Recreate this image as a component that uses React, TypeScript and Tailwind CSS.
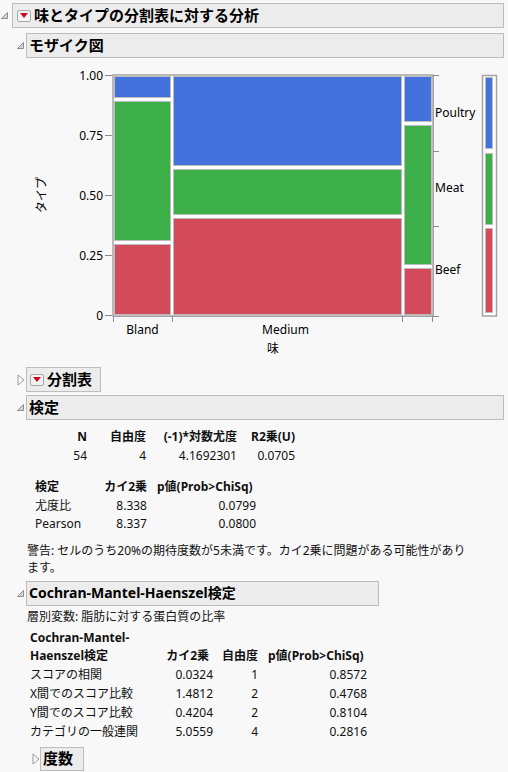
const BLUE = '#4472dc';
const GREEN = '#3daf48';
const RED = '#d34a5a';

const OpenTri = () => (
  <svg width="7" height="7" viewBox="0 0 7 7" className="block">
    <path d="M0.5 6.5 L6.5 0.5 L6.5 6.5 Z" fill="#d6d6d6" stroke="#8c8c8c" strokeWidth="1" />
  </svg>
);

const ClosedTri = () => (
  <svg width="8" height="12" viewBox="0 0 8 12" className="block">
    <path d="M1 1 L7 6 L1 11 Z" fill="#fafafa" stroke="#9a9a9a" strokeWidth="1" />
  </svg>
);

const RedBtn = () => (
  <span className="inline-flex w-[14px] h-[12px] items-center justify-center rounded-[2px] border border-[#a9a9a9] bg-[#f3f3f3] shrink-0">
    <svg width="8" height="5" viewBox="0 0 8 5" className="block">
      <path d="M0 0 L8 0 L4 5 Z" fill="#d0021b" />
    </svg>
  </span>
);

interface HeaderProps {
  label: string;
  open?: boolean;
  menu?: boolean;
  lead: string;
  box: string;
  size?: string;
}

const Header: React.FC<HeaderProps> = ({ label, open = true, menu = false, lead, box, size = 'text-[15px]' }) => (
  <div className="flex items-center">
    <div className={lead}>{open ? <OpenTri /> : <ClosedTri />}</div>
    <div className={`h-[25px] border border-[#bdbdbd] bg-[#ececec] flex items-center gap-[3px] font-bold text-black ${size} ${box}`}>
      {menu && <RedBtn />}
      <span className="whitespace-nowrap leading-none">{label}</span>
    </div>
  </div>
);

const Mosaic = () => {
  const cells = [
    // Bland
    { x: 114, w: 57, y: 76, h: 22, c: BLUE },
    { x: 114, w: 57, y: 101, h: 140, c: GREEN },
    { x: 114, w: 57, y: 244, h: 71, c: RED },
    // Medium
    { x: 173, w: 229, y: 76, h: 90, c: BLUE },
    { x: 173, w: 229, y: 169, h: 46, c: GREEN },
    { x: 173, w: 229, y: 218, h: 97, c: RED },
    // Spicy
    { x: 404, w: 28, y: 76, h: 46, c: BLUE },
    { x: 404, w: 28, y: 125, h: 140, c: GREEN },
    { x: 404, w: 28, y: 268, h: 47, c: RED },
  ];
  const legend = [
    { y: 77, h: 72, c: BLUE },
    { y: 153, h: 72, c: GREEN },
    { y: 228, h: 85, c: RED },
  ];
  const yTicks = [
    { y: 315, t: '0' },
    { y: 255, t: '0.25' },
    { y: 195, t: '0.50' },
    { y: 135, t: '0.75' },
    { y: 75, t: '1.00' },
  ];
  return (
    <svg width="508" height="305" viewBox="0 58 508 305" className="block">
      <g fontFamily="'Noto Sans','Noto Sans CJK JP',sans-serif" fontSize="12" fill="#000">
        <rect x="113" y="75" width="320" height="241" fill="#ffffff" stroke="#a4a4a4" strokeWidth="1.5" />
        {cells.map((r, i) => (
          <rect key={i} x={r.x + 0.5} y={r.y + 0.5} width={r.w - 1} height={r.h - 1} fill={r.c} stroke="#bdbdbd" strokeWidth="1" />
        ))}
        {/* left axis */}
        {yTicks.map((t) => (
          <g key={t.t}>
            <line x1="105" x2="112" y1={t.y + 0.5} y2={t.y + 0.5} stroke="#8c8c8c" />
            <text x="103" y={t.y + 4.5} textAnchor="end">{t.t}</text>
          </g>
        ))}
        <text transform="translate(46 195) rotate(-90)" textAnchor="middle">タイプ</text>
        {/* bottom axis */}
        <line x1="113" x2="433" y1="316.5" y2="316.5" stroke="#a4a4a4" />
        {[113.5, 172.5, 402.5, 432.5].map((x) => (
          <line key={x} x1={x} x2={x} y1="316" y2="322" stroke="#8c8c8c" />
        ))}
        <text x="142.5" y="334" textAnchor="middle">Bland</text>
        <text x="285.5" y="334" textAnchor="middle">Medium</text>
        <text x="273" y="353" textAnchor="middle">味</text>
        {/* right axis */}
        <line x1="433.5" x2="433.5" y1="75" y2="317" stroke="#a4a4a4" />
        {[75.5, 151.5, 226.5, 316.5].map((y) => (
          <line key={y} x1="433" x2="439" y1={y} y2={y} stroke="#8c8c8c" />
        ))}
        <text x="435" y="117">Poultry</text>
        <text x="435" y="192">Meat</text>
        <text x="435" y="274">Beef</text>
        {/* legend bar */}
        <rect x="482.5" y="75.5" width="14" height="240.5" fill="#ffffff" stroke="#a4a4a4" strokeWidth="1.5" />
        {legend.map((r, i) => (
          <rect key={i} x="485.5" y={r.y + 0.5} width="7" height={r.h - 1} fill={r.c} stroke="#bdbdbd" strokeWidth="1" />
        ))}
      </g>
    </svg>
  );
};

export default function App() {
  return (
    <div className="w-[508px] h-[772px] overflow-hidden bg-[#f8f8f8] text-[12px] text-[#111] font-['Noto_Sans','Noto_Sans_CJK_JP',sans-serif]">
      <div className="pt-[3px]">
        <Header label="味とタイプの分割表に対する分析" menu lead="w-[12px] pl-[1px]" box="w-[492px] pl-[4px]" />
      </div>
      <div className="mt-[5px]">
        <Header label="モザイク図" lead="w-[26px] pl-[17px]" box="w-[478px] pl-[2px]" />
      </div>

      <Mosaic />

      <div className="mt-[4px]">
        <Header label="分割表" open={false} menu lead="w-[26px] pl-[17px]" box="w-[75px] pl-[3px]" />
      </div>
      <div className="mt-[3px]">
        <Header label="検定" lead="w-[26px] pl-[17px]" box="w-[478px] pl-[2px]" />
      </div>

      {/* summary */}
      <div className="mt-[7px] pl-[57px] grid grid-cols-[30px_59px_91px_58px] leading-[19px] text-right">
        <div className="font-bold">N</div>
        <div className="font-bold">自由度</div>
        <div className="font-bold">(-1)*対数尤度</div>
        <div className="font-bold">R2乗(U)</div>
        <div>54</div>
        <div>4</div>
        <div>4.1692301</div>
        <div>0.0705</div>
      </div>

      <div className="mt-[13px] pl-[35px] grid grid-cols-[60px_52px_118px] leading-[18.5px]">
        <div className="font-bold">検定</div>
        <div className="font-bold text-right">カイ2乗</div>
        <div className="font-bold pl-[10px] whitespace-nowrap">p値(Prob&gt;ChiSq)</div>
        <div>尤度比</div>
        <div className="text-right">8.338</div>
        <div className="text-right pr-[9px]">0.0799</div>
        <div>Pearson</div>
        <div className="text-right">8.337</div>
        <div className="text-right pr-[9px]">0.0800</div>
      </div>

      <p className="mt-[8px] pl-[27px] leading-[17px]">
        警告: セルのうち20%の期待度数が5未満です。カイ2乗に問題がある可能性があり
        <br />
        ます。
      </p>

      <div className="mt-[5px]">
        <Header label="Cochran-Mantel-Haenszel検定" lead="w-[26px] pl-[17px]" box="w-[353px] pl-[2px]" size="text-[14px]" />
      </div>

      <p className="mt-[2px] pl-[27px] leading-[17px]">層別変数: 脂肪に対する蛋白質の比率</p>

      <div className="mt-[4px] pl-[30px] grid grid-cols-[130px_53px_45px_118px] leading-[19px]">
        <div className="font-bold leading-[18px]">
          Cochran-Mantel-
          <br />
          Haenszel検定
        </div>
        <div className="font-bold text-right pr-[4px] self-end leading-[18px]">カイ2乗</div>
        <div className="font-bold text-right self-end leading-[18px]">自由度</div>
        <div className="font-bold pl-[10px] self-end whitespace-nowrap leading-[18px]">p値(Prob&gt;ChiSq)</div>
        {[
          ['スコアの相関', '0.0324', '1', '0.8572'],
          ['X間でのスコア比較', '1.4812', '2', '0.4768'],
          ['Y間でのスコア比較', '0.4204', '2', '0.8104'],
          ['カテゴリの一般連関', '5.0559', '4', '0.2816'],
        ].map((r) => (
          <div key={r[0]} className="contents">
            <div>{r[0]}</div>
            <div className="text-right">{r[1]}</div>
            <div className="text-right">{r[2]}</div>
            <div className="text-right pr-[9px]">{r[3]}</div>
          </div>
        ))}
      </div>

      <div className="mt-[6px]">
        <Header label="度数" open={false} lead="w-[40px] pl-[32px]" box="w-[44px] pl-[2px] !h-[24px]" />
      </div>
    </div>
  );
}
